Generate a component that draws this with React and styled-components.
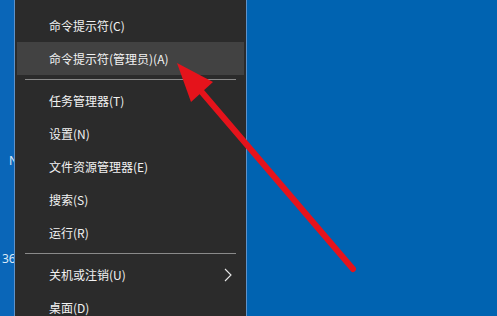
import React from "react";
import styled, { createGlobalStyle } from "styled-components";

const GlobalStyle = createGlobalStyle`
  html, body {
    margin: 0;
    padding: 0;
    width: 497px;
    height: 316px;
    overflow: hidden;
    background: #0063b1;
  }
`;

const menuItems = [
  { label: "命令提示符(C)" },
  { label: "命令提示符(管理员)(A)", active: true },
  { separator: true },
  { label: "任务管理器(T)" },
  { label: "设置(N)" },
  { label: "文件资源管理器(E)" },
  { label: "搜索(S)" },
  { label: "运行(R)" },
  { separator: true },
  { label: "关机或注销(U)", submenu: true },
  { label: "桌面(D)" },
];

const App = () => {
  return (
    <Screen>
      <GlobalStyle />
      <DesktopStrip>
        <IconLabel style={{ top: 152, left: 9 }}>N</IconLabel>
        <IconLabel style={{ top: 250, left: 2 }}>36</IconLabel>
      </DesktopStrip>
      <Menu>
        {menuItems.map((item, i) =>
          item.separator ? (
            <Separator key={i} />
          ) : (
            <MenuItem key={i} $active={item.active}>
              <span>{item.label}</span>
              {item.submenu && (
                <svg width="8" height="14" viewBox="0 0 8 14">
                  <path
                    d="M1 1 L7 7 L1 13"
                    fill="none"
                    stroke="#e8e8e8"
                    strokeWidth="1.1"
                  />
                </svg>
              )}
            </MenuItem>
          )
        )}
      </Menu>
      <Desktop />
      <Arrow width="497" height="316" viewBox="0 0 497 316">
        <line
          x1="353"
          y1="269"
          x2="200"
          y2="90"
          stroke="#e5131b"
          strokeWidth="6"
          strokeLinecap="round"
        />
        <polygon points="177,63 213,82 191,102" fill="#e5131b" />
      </Arrow>
    </Screen>
  );
};

const Screen = styled.div`
  position: relative;
  display: flex;
  width: 497px;
  height: 316px;
  overflow: hidden;
  font-family: "Noto Sans CJK SC", "Noto Sans", sans-serif;
`;

const DesktopStrip = styled.div`
  position: relative;
  width: 14px;
  flex-shrink: 0;
  background: #0a66b8;
  overflow: hidden;
`;

const IconLabel = styled.span`
  position: absolute;
  color: #dce9f7;
  font-size: 12px;
  font-family: "Noto Sans", sans-serif;
`;

const Menu = styled.div`
  width: 231px;
  flex-shrink: 0;
  background: #2b2b2b;
  border-left: 1px solid #5f92c8;
  border-right: 1px solid #5f92c8;
  padding-top: 9px;
  display: flex;
  flex-direction: column;
  overflow: hidden;
`;

const MenuItem = styled.div`
  height: 33px;
  flex-shrink: 0;
  margin: 0 2px;
  padding: 0 12px 0 32px;
  display: flex;
  align-items: center;
  justify-content: space-between;
  color: #f2f2f2;
  font-size: 12px;
  background: ${(p) => (p.$active ? "#424242" : "transparent")};
`;

const Separator = styled.div`
  height: 9px;
  flex-shrink: 0;
  display: flex;
  align-items: center;
  margin: 0 10px;

  &::after {
    content: "";
    flex: 1;
    height: 1px;
    background: #8a8a8a;
  }
`;

const Desktop = styled.div`
  flex: 1;
  background: #0063b1;
`;

const Arrow = styled.svg`
  position: absolute;
  top: 0;
  left: 0;
  pointer-events: none;
`;

export default App;
